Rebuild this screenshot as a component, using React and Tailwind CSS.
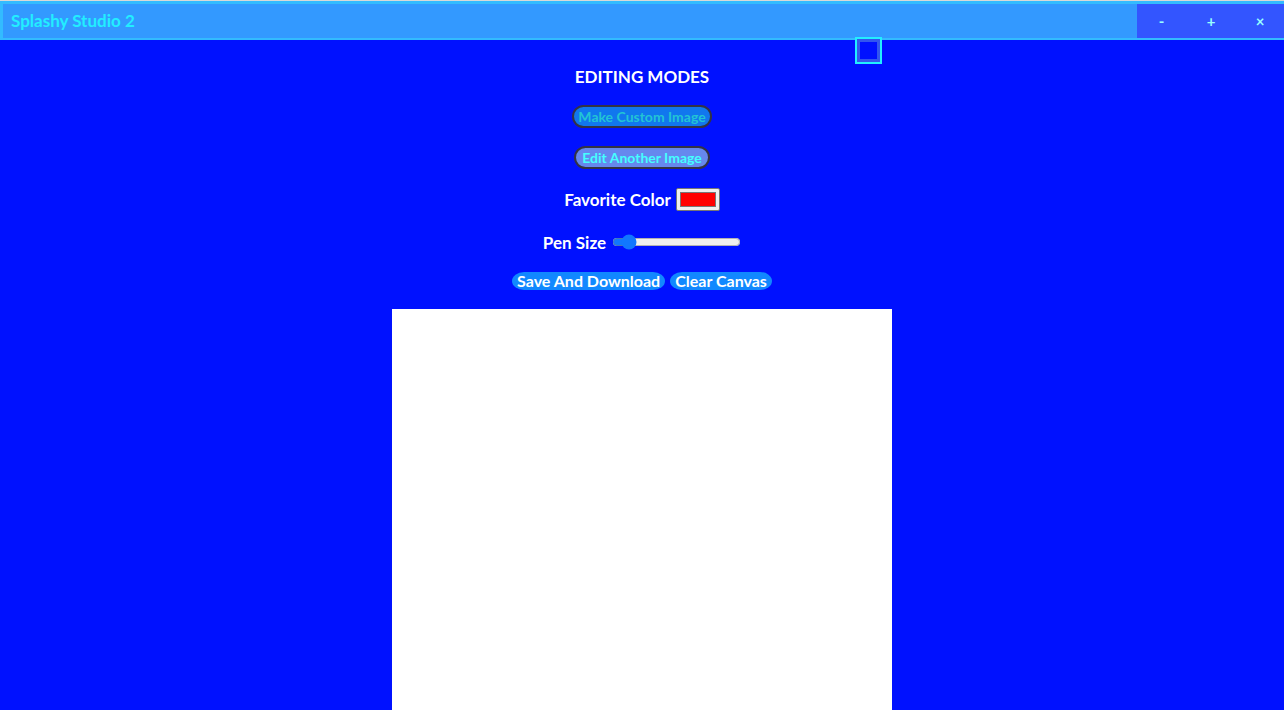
import { useState } from "react";

const font = { fontFamily: "Lato, 'Liberation Sans', sans-serif" };

const App = () => {
  const [penSize, setPenSize] = useState(5);

  return (
    <div className="relative w-[1284px] h-[710px] overflow-hidden bg-[#0011ff]" style={font}>
      {/* title bar */}
      <div className="h-[40px] border-t border-[#d8d8d8]">
        <div className="h-[39px] flex items-stretch bg-[#3399ff] border-[3px] border-r-0 border-b-[2px] border-[#33bbff]">
          <div className="flex-1 flex items-center pl-[8px] text-[17px] font-bold text-[#22eeff]">
            Splashy Studio 2
          </div>
          <div className="flex bg-[#3355ff] text-[#99ffff] font-bold text-[15px]">
            <button className="w-[49px] flex items-center justify-center">-</button>
            <button className="w-[50px] flex items-center justify-center">+</button>
            <button className="w-[48px] flex items-center justify-center">×</button>
          </div>
        </div>
      </div>

      <div className="absolute left-[855px] top-[37px] w-[27px] h-[27px] border-[2px] border-[#22eeff] p-[3px] bg-[#3355ee]">
        <div className="w-full h-full bg-[#0011ff]"></div>
      </div>

      <div className="flex flex-col items-center pt-[26px]">
        <h1 className="h-[22px] text-[17px] leading-[22px] font-bold text-white">EDITING MODES</h1>

        <button className="mt-[17px] h-[23px] w-[140px] rounded-full border-2 border-[#333344] bg-[#1177ee] text-[#22c4d4] text-[14px] font-bold leading-none whitespace-nowrap">
          Make Custom Image
        </button>

        <button className="mt-[18px] h-[23px] w-[136px] rounded-full border-2 border-[#333344] bg-[#6688ee] text-[#44ffff] text-[14px] font-bold leading-none whitespace-nowrap">
          Edit Another Image
        </button>

        <div className="mt-[19px] h-[23px] flex items-center gap-[5px] text-white text-[17px] font-bold">
          <span>Favorite Color</span>
          <div className="w-[44px] h-[23px] bg-[#efefef] border border-[#767676] rounded-[2px] p-[3px]">
            <div className="w-full h-full bg-[#ff0000] border border-[#777777]"></div>
          </div>
        </div>

        <div className="mt-[21px] h-[20px] flex items-center gap-[6px] text-white text-[17px] font-bold">
          <span className="pt-[2px]">Pen Size</span>
          <input
            type="range"
            min={1}
            max={50}
            value={penSize}
            onChange={(e) => setPenSize(e.target.value)}
            className="m-0 w-[129px] h-[16px] accent-[#1177ff]"
          />
        </div>

        <div className="mt-[20px] h-[18px] flex items-center gap-[5px] text-white text-[16px] font-bold">
          <button className="h-[18px] px-[5px] leading-[18px] rounded-[12px/9px] bg-[#1188ff] whitespace-nowrap">Save And Download</button>
          <button className="h-[18px] px-[5px] leading-[18px] rounded-[12px/9px] bg-[#1188ff] whitespace-nowrap">Clear Canvas</button>
        </div>

        <div className="mt-[19px] w-[500px] h-[402px] bg-white"></div>
      </div>
    </div>
  );
};

export default App;
